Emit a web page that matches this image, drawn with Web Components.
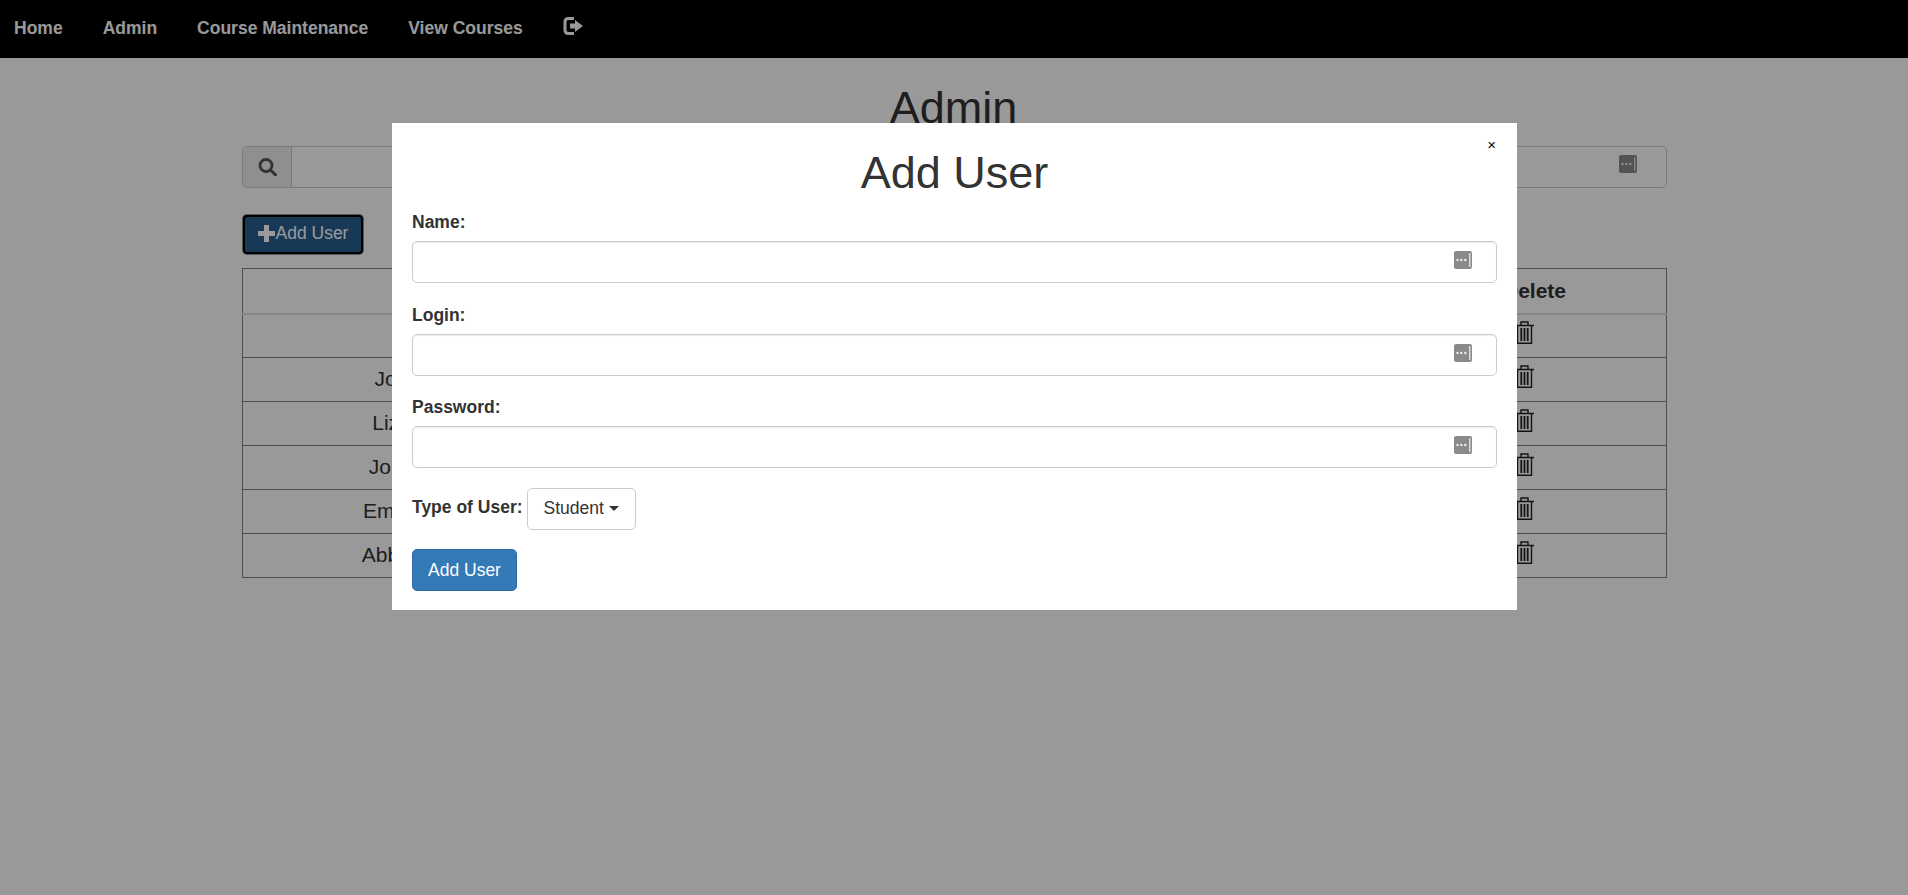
<!DOCTYPE html>
<html>
<head>
<meta charset="utf-8">
<title>Admin</title>
<style>
  html, body { margin: 0; padding: 0; height: 100%; }
  body {
    font-family: "Liberation Sans", Arial, sans-serif;
    font-size: 17.5px;
    line-height: 1.42857;
    color: #333;
    background: #fff;
  }
</style>
</head>
<body>

<app-navbar>
  <nav-link>Home</nav-link>
  <nav-link>Admin</nav-link>
  <nav-link>Course Maintenance</nav-link>
  <nav-link>View Courses</nav-link>
  <nav-link><svg style="margin-bottom:4px" width="20" height="18" viewBox="0 0 20 18"><path fill="currentColor" d="M11 0H5C2.500 0 .5 2 .5 4.500v9C.5 16 2.500 18 5 18h6v-3H5.500C4.300 15 3.500 14.200 3.500 13V5c0-1.200.8-2 2-2H11zM7 6.500h5V3l8 6-8 6v-3.500H7z"/></svg></nav-link>
</app-navbar>

<admin-page>
  <page-title>Admin</page-title>
  <search-bar></search-bar>
  <add-button>Add User</add-button>
  <user-table></user-table>
</admin-page>

<modal-dialog>
  <page-title>Add User</page-title>
  <form-field label="Name:"></form-field>
  <form-field label="Login:"></form-field>
  <form-field label="Password:"></form-field>
  <type-select label="Type of User:" value="Student"></type-select>
  <primary-button>Add User</primary-button>
</modal-dialog>

<script>
const KEY_ICON = `<svg class="key" width="18" height="18" viewBox="0 0 18 18">
  <rect width="18" height="18" rx="2" fill="#8a8a8a"/>
  <g fill="#eee"><circle cx="3.500" cy="9" r="1.200"/><circle cx="7.300" cy="9" r="1.200"/><circle cx="11.300" cy="9" r="1.200"/><rect x="15.200" y="2" width="1.200" height="14"/></g>
</svg>`;

class AppNavbar extends HTMLElement {
  constructor() {
    super();
    this.attachShadow({mode: "open"}).innerHTML = `<style>
      :host {
        display: flex;
        height: 58px;
        box-sizing: border-box;
        padding-left: 14px;
        background: #000;
        color: #fff;
        font-weight: bold;
        gap: 40px;
      }
    </style><slot></slot>`;
  }
}

class NavLink extends HTMLElement {
  constructor() {
    super();
    this.attachShadow({mode: "open"}).innerHTML = `<style>
      :host { display: flex; align-items: center; height: 56px; }
    </style><slot></slot>`;
  }
}

class AdminPage extends HTMLElement {
  constructor() {
    super();
    this.attachShadow({mode: "open"}).innerHTML = `<style>
      :host {
        display: block;
        width: 1425px;
        margin-left: 242px;
        padding-top: 25px;
      }
      ::slotted(page-title) { padding-right: 2px; }
    </style><slot></slot>`;
  }
}

class PageTitle extends HTMLElement {
  constructor() {
    super();
    this.attachShadow({mode: "open"}).innerHTML = `<style>
      :host {
        display: block;
        font-size: 45px;
        line-height: 49.5px;
        margin-bottom: 12.5px;
        text-align: center;
      }
    </style><slot></slot>`;
  }
}

class SearchBar extends HTMLElement {
  constructor() {
    super();
    this.attachShadow({mode: "open"}).innerHTML = `<style>
      :host {
        display: flex;
        height: 42.5px;
        margin-top: 13px;
        box-sizing: border-box;
        border: 1px solid #ccc;
        border-radius: 5px;
      }
      .addon {
        width: 48px;
        display: flex;
        align-items: center;
        justify-content: center;
        background: #eee;
        border-right: 1px solid #ccc;
        border-radius: 4px 0 0 4px;
        color: #555;
      }
      .field {
        flex: 1;
        display: flex;
        align-items: center;
        justify-content: flex-end;
        padding-right: 29px;
      }
      .key { margin-bottom: 5px; }
    </style>
    <div class="addon"><svg width="19" height="18" viewBox="0 0 19 18"><circle cx="8" cy="7.500" r="6" fill="none" stroke="currentColor" stroke-width="2.800"/><path d="M12.500 12l5 4.800" stroke="currentColor" stroke-width="3" stroke-linecap="round"/></svg></div>
    <div class="field">${KEY_ICON}</div>`;
  }
}

class AddButton extends HTMLElement {
  constructor() {
    super();
    this.attachShadow({mode: "open"}).innerHTML = `<style>
      :host {
        display: flex;
        align-items: center;
        width: 120px;
        height: 39px;
        margin: 26.500px 0 0 1px;
        box-sizing: border-box;
        padding: 0 0 2px 13px;
        background: #286090;
        color: #fff;
        border: 2px solid #000;
        border-radius: 4px;
        box-shadow: 0 0 0 1px #8a8f94;
      }
      svg { flex: none; margin-right: .5px; }
    </style>
    <svg width="17" height="17" viewBox="0 0 17 17"><path fill="currentColor" d="M6 0h5v6h6v5h-6v6H6v-6H0V6h6z"/></svg><slot></slot>`;
  }
}

class UserTable extends HTMLElement {
  constructor() {
    super();
    const names = ["", "Joe", "Liza", "John", "Emilie", "Abbey"];
    const trash = `<svg class="trash" width="19" height="23" viewBox="0 0 19 23">
      <path fill="none" stroke="currentColor" stroke-width="1.400" d="M0 4.500h19M6 4.500V1h7v3.500M2.500 4.500v17.700h14V4.500"/>
      <path fill="none" stroke="currentColor" stroke-width="1.800" d="M6.300 7v13M9.500 7v13M12.700 7v13"/>
    </svg>`;
    this.attachShadow({mode: "open"}).innerHTML = `<style>
      :host { display: block; margin-top: 14.500px; }
      table {
        width: 100%;
        border-collapse: collapse;
        table-layout: fixed;
        font-size: 21px;
      }
      th, td {
        height: 44px;
        padding: 0 0 2px;
        border: 1px solid #808080;
        text-align: center;
        box-sizing: border-box;
      }
      th { height: 45px; border-bottom: 2px solid #ddd; padding: 0 0 0 4px; }
      .first { width: 298px; }
      .last { width: 268px; }
      .trash { display: block; margin: -5px 0 0 116px; color: #222; }
    </style>
    <table>
      <tr><th class="first"></th><th></th><th class="last">Delete</th></tr>
      ${names.map(n => `<tr><td>${n}</td><td></td><td>${trash}</td></tr>`).join("")}
    </table>`;
  }
}

class ModalDialog extends HTMLElement {
  constructor() {
    super();
    this.attachShadow({mode: "open"}).innerHTML = `<style>
      :host {
        position: fixed;
        inset: 0;
        display: block;
        background: rgba(0, 0, 0, .4);
      }
      .content {
        position: relative;
        width: 1125px;
        box-sizing: border-box;
        margin: 123px 0 0 392px;
        padding: 25px 20px 19px;
        background: #fff;
      }
      .close {
        position: absolute;
        top: 11px;
        right: 21px;
        font-size: 15px;
        line-height: 22px;
        color: #000;
      }
    </style>
    <div class="content"><div class="close">×</div><slot></slot></div>`;
  }
}

class FormField extends HTMLElement {
  constructor() {
    super();
    this.attachShadow({mode: "open"}).innerHTML = `<style>
      :host { display: block; margin-bottom: 19.250px; }
      label { display: block; font-weight: bold; height: 25px; margin-bottom: 6.250px; }
      .input {
        height: 42px;
        box-sizing: border-box;
        border: 1px solid #ccc;
        border-radius: 5px;
        box-shadow: inset 0 1px 1px rgba(0,0,0,.075);
        display: flex;
        align-items: center;
        justify-content: flex-end;
        padding-right: 24px;
      }
      .key { margin-bottom: 4px; }
    </style>
    <label>${this.getAttribute("label")}</label>
    <div class="input">${KEY_ICON}</div>`;
  }
}

class TypeSelect extends HTMLElement {
  constructor() {
    super();
    this.attachShadow({mode: "open"}).innerHTML = `<style>
      :host { display: flex; align-items: center; gap: 4px; }
      label { font-weight: bold; margin-bottom: 3px; }
      .toggle {
        display: flex;
        align-items: center;
        height: 42.500px;
        box-sizing: border-box;
        padding: 0 16px;
        border: 1px solid #ccc;
        border-radius: 5px;
        background: #fff;
      }
      .caret {
        width: 0;
        height: 0;
        margin-left: 5px;
        border-top: 5px solid #333;
        border-left: 5px solid transparent;
        border-right: 5px solid transparent;
      }
    </style>
    <label>${this.getAttribute("label")}</label>
    <div class="toggle">${this.getAttribute("value")}<span class="caret"></span></div>`;
  }
}

class PrimaryButton extends HTMLElement {
  constructor() {
    super();
    this.attachShadow({mode: "open"}).innerHTML = `<style>
      :host {
        display: flex;
        width: fit-content;
        align-items: center;
        height: 42.500px;
        margin-top: 18.750px;
        box-sizing: border-box;
        padding: 0 15px;
        background: #337ab7;
        color: #fff;
        border: 1px solid #2e6da4;
        border-radius: 5px;
      }
    </style><slot></slot>`;
  }
}

customElements.define("app-navbar", AppNavbar);
customElements.define("nav-link", NavLink);
customElements.define("admin-page", AdminPage);
customElements.define("page-title", PageTitle);
customElements.define("search-bar", SearchBar);
customElements.define("add-button", AddButton);
customElements.define("user-table", UserTable);
customElements.define("modal-dialog", ModalDialog);
customElements.define("form-field", FormField);
customElements.define("type-select", TypeSelect);
customElements.define("primary-button", PrimaryButton);
</script>
</body>
</html>
